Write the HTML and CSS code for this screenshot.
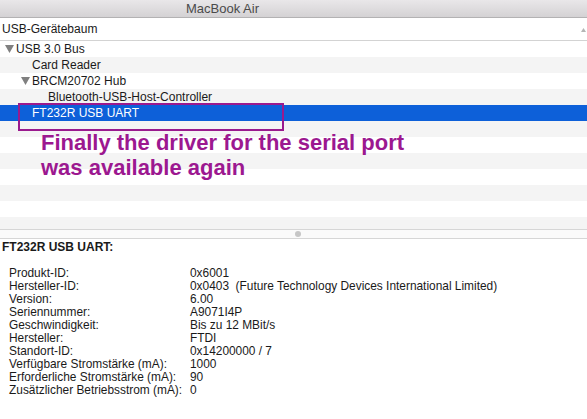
FILE: index.html
```html
<!DOCTYPE html>
<html>
<head>
<meta charset="utf-8">
<link rel="stylesheet" href="styles.css">
</head>
<body>
<div class="window">
  <div class="titlebar">MacBook Air</div>
  <div class="header">
    <span>USB-Gerätebaum</span>
    <svg class="sort" width="5" height="4" viewBox="0 0 5 4"><path d="M0 4 L2.5 0 L5 4 Z" fill="#b5b5b5"/></svg>
  </div>
  <div class="tree">
    <div class="row lvl0"><svg class="tri" width="9" height="8" viewBox="0 0 9 8"><path d="M0 0 L9 0 L4.5 8 Z" fill="#808080"/></svg>USB 3.0 Bus</div>
    <div class="row lvl1">Card Reader</div>
    <div class="row lvl1t"><svg class="tri" width="9" height="8" viewBox="0 0 9 8"><path d="M0 0 L9 0 L4.5 8 Z" fill="#808080"/></svg>BRCM20702 Hub</div>
    <div class="row lvl2">Bluetooth-USB-Host-Controller</div>
    <div class="row lvl1 sel">FT232R USB UART</div>
    <div class="row"></div>
    <div class="row"></div>
    <div class="row"></div>
    <div class="row"></div>
    <div class="row"></div>
    <div class="row"></div>
    <div class="row"></div>
    <div class="highlight"></div>
    <div class="note">Finally the driver for the serial port<br>was available again</div>
  </div>
  <div class="splitter"><span class="dot"></span></div>
  <div class="details">
    <div class="dtitle">FT232R USB UART:</div>
    <div class="props">
      <span>Produkt-ID:</span><span>0x6001</span>
      <span>Hersteller-ID:</span><span>0x0403&nbsp; (Future Technology Devices International Limited)</span>
      <span>Version:</span><span>6.00</span>
      <span>Seriennummer:</span><span>A9071I4P</span>
      <span>Geschwindigkeit:</span><span>Bis zu 12 MBit/s</span>
      <span>Hersteller:</span><span>FTDI</span>
      <span>Standort-ID:</span><span>0x14200000 / 7</span>
      <span>Verfügbare Stromstärke (mA):</span><span>1000</span>
      <span>Erforderliche Stromstärke (mA):</span><span>90</span>
      <span>Zusätzlicher Betriebsstrom (mA):</span><span>0</span>
    </div>
  </div>
</div>
</body>
</html>
```

FILE: styles.css
```css
html, body {
  margin: 0;
  padding: 0;
  background: #ffffff;
}
body {
  width: 587px;
  height: 419px;
  overflow: hidden;
  font-family: "Liberation Sans", Arial, sans-serif;
  font-size: 12px;
  color: #1a1a1a;
}
.window {
  display: flex;
  flex-direction: column;
  width: 587px;
  height: 419px;
}
.titlebar {
  height: 17px;
  line-height: 17px;
  border-bottom: 1px solid #b3b2b3;
  background: linear-gradient(#e9e7e9, #d4d2d4);
  color: #4a4a4a;
  font-size: 13px;
  padding-left: 186px;
}
.header {
  height: 22px;
  border-bottom: 1px solid #d3d3d3;
  display: flex;
  align-items: center;
  justify-content: space-between;
  padding-left: 2px;
  padding-right: 1px;
  background: #ffffff;
}
.sort {
  margin-top: 2px;
}
.tree {
  position: relative;
  height: 188px;
  overflow: hidden;
  border-bottom: 1px solid #d6d6d6;
}
.row {
  height: 16px;
  line-height: 16px;
  background: #ffffff;
  white-space: nowrap;
  display: flex;
  align-items: center;
}
.row:nth-child(even) {
  background: #f4f4f4;
}
.row.sel {
  background: #0d60d9;
  color: #ffffff;
}
.tri {
  margin-right: 2px;
}
.lvl0 { padding-left: 5px; }
.lvl1 { padding-left: 32px; }
.lvl1t { padding-left: 21px; }
.lvl2 { padding-left: 48px; }
.highlight {
  position: absolute;
  left: 18px;
  top: 62px;
  width: 262px;
  height: 24px;
  border: 2px solid #9a1a8e;
}
.note {
  position: absolute;
  left: 41px;
  top: 89px;
  font-size: 22px;
  line-height: 25px;
  font-weight: bold;
  color: #9c1890;
}
.splitter {
  height: 8px;
  border-bottom: 1px solid #d6d6d6;
  background: #fafafa;
  display: flex;
  align-items: center;
  justify-content: center;
  padding-left: 8px;
}
.dot {
  width: 6px;
  height: 6px;
  border-radius: 50%;
  background: #c6c6c6;
}
.details {
  flex: 1;
  padding-left: 2px;
}
.dtitle {
  font-weight: bold;
  line-height: 15px;
  margin-top: 1px;
}
.props {
  display: grid;
  grid-template-columns: 181px auto;
  margin-top: 12px;
  padding-left: 7px;
  line-height: 13px;
  font-size: 11.9px;
}
```
